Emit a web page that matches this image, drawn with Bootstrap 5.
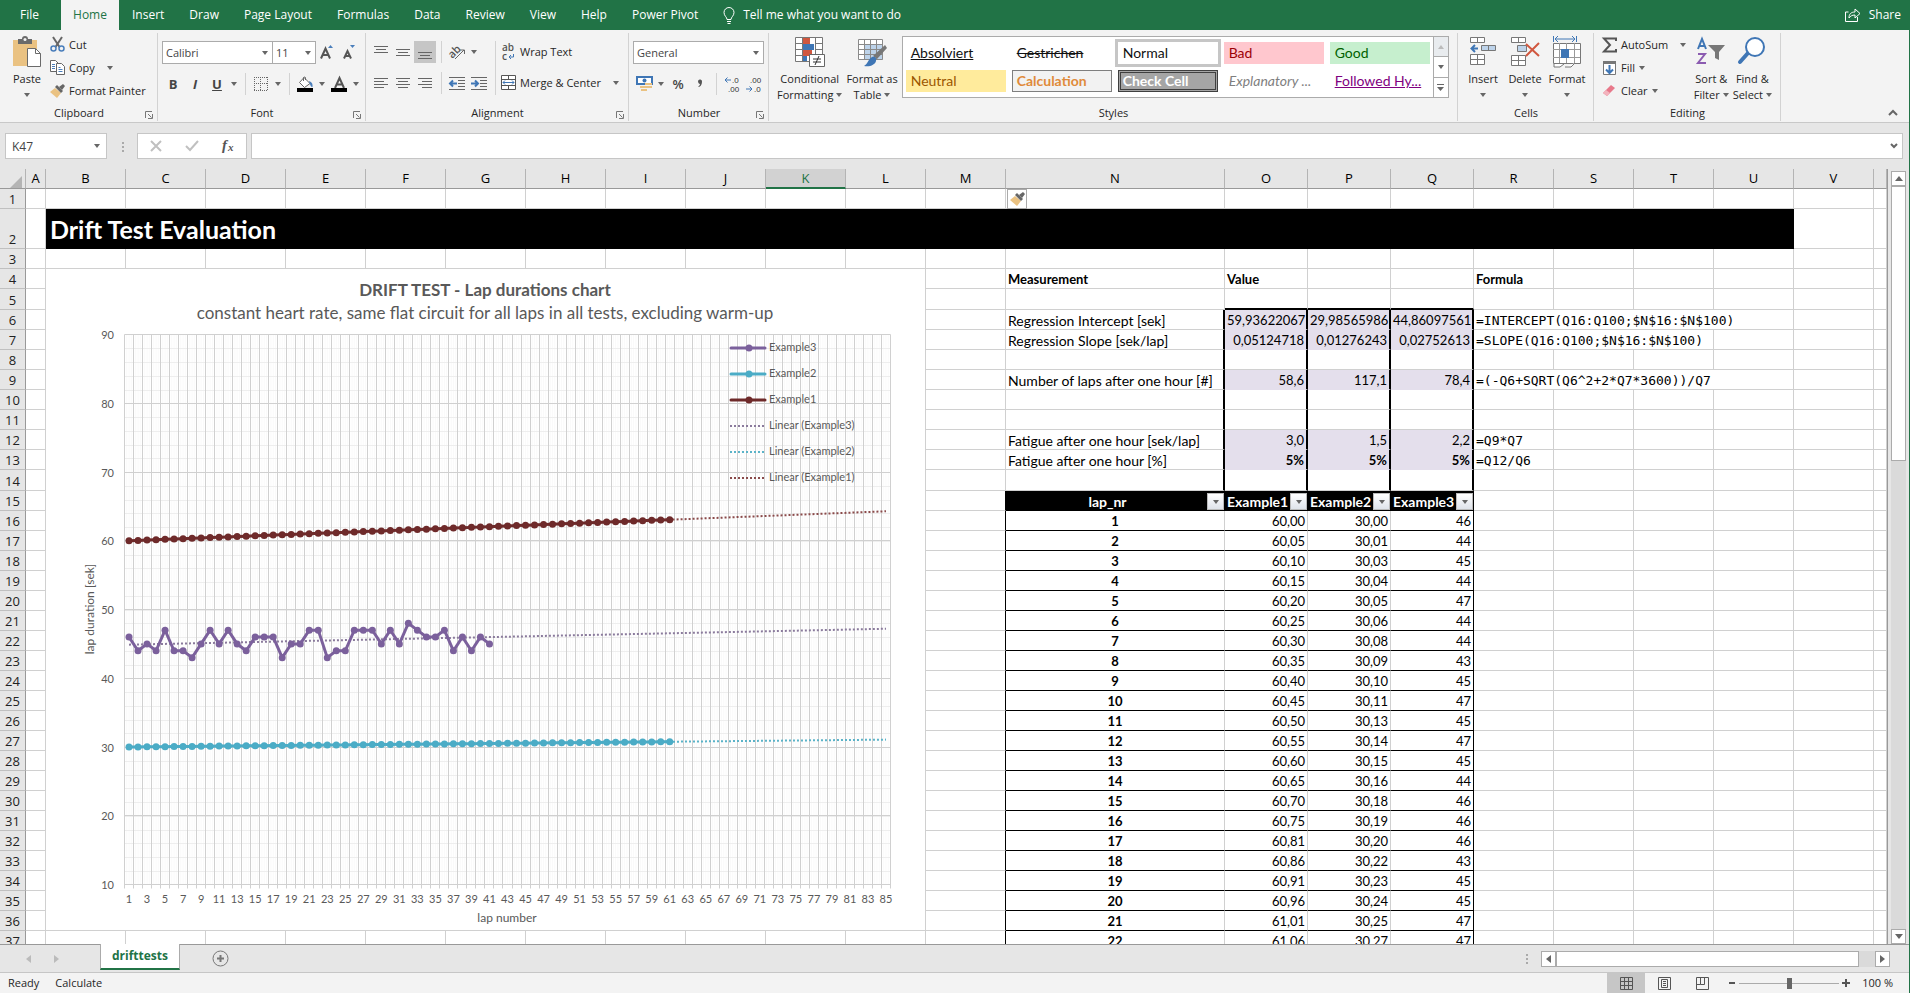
<!DOCTYPE html>
<html lang="en">
<head>
<meta charset="utf-8">
<meta name="viewport" content="width=device-width, initial-scale=1">
<title>Drift Test Evaluation</title>
<link href="https://cdn.jsdelivr.net/npm/bootstrap@5.3.0/dist/css/bootstrap.min.css" rel="stylesheet">
<style>
:root { --xl-green:#217346; --xl-bar:#e6e6e6; --xl-ribbon:#f3f3f3; --xl-line:#d0d0d0; --xl-ink:#262626; }
body { font-family:"Open Sans","Liberation Sans",sans-serif; font-size:11px; line-height:16px; color:var(--xl-ink); background:var(--xl-bar); border-right:1px solid var(--xl-green); }
button { font:inherit; color:inherit; background:none; border:0; padding:0; white-space:nowrap; }
svg { display:block; flex:none; overflow:visible; }

/* menu tabs */
.menu-bar { height:30px; background:var(--xl-green); font-size:12px; }
.menu-bar a, .menu-bar button { display:flex; align-items:center; color:#fff; text-decoration:none; padding:0 12px 0 13px; height:30px; white-space:nowrap; }
.menu-bar .file-tab { width:61px; padding:0 0 0 20px; }
.menu-bar .on { background:var(--xl-ribbon); color:var(--xl-green); width:58px; justify-content:center; padding:0; }

/* ribbon */
.ribbon { background:var(--xl-ribbon); height:93px; border-bottom:1px solid #c8c8c8; }
.rgroup { position:relative; display:flex; flex-direction:column; height:88px; margin-top:3px; padding-left:4px; border-right:1px solid #d2d2d2; }
.rbody { display:flex; height:73px; }
.rname { text-align:center; line-height:16px; margin-left:-3px; }
.launch { position:absolute; right:4px; bottom:2px; }
.tool { width:22px; height:22px; display:flex; align-items:center; justify-content:center; flex:none; }
.tool.pressed { background:#c6c6c6; }
.drop { width:12px; height:22px; display:flex; align-items:center; justify-content:center; flex:none; }
.tri { display:inline-block; border:solid transparent; border-width:4px 3px 0; border-top-color:#666; flex:none; }
.vsep { width:10px; height:22px; flex:none; background:linear-gradient(#d2d2d2,#d2d2d2) center/1px 100% no-repeat; }
.tools-col { padding-top:8px; display:flex; flex-direction:column; gap:9px; }
.line-col { display:flex; flex-direction:column; }
.line-col button { height:23px; display:flex; align-items:center; gap:4px; }
.big { display:flex; flex-direction:column; align-items:center; text-align:center; padding-top:3px; }
.big svg { margin-bottom:3px; }
.big .tri { margin-top:6px; }
.big .cap-tri { margin:0 0 2px 3px; }
.xl-select { appearance:none; height:23px; border:1px solid #ababab; border-radius:0; padding:0 3px; font:inherit; color:#444; line-height:21px; background:#fff url("data:image/svg+xml,%3Csvg xmlns='http://www.w3.org/2000/svg' width='6' height='4'%3E%3Cpath d='M0 0h6L3 4z' fill='%23666'/%3E%3C/svg%3E") right 4px center no-repeat; }
.w-font { width:111px; } .w-size { width:43px; border-left:0; } .w-num { width:131px; }
.g-clip { width:158px; } .g-font { width:208px; } .g-align { width:263px; } .g-num { width:140px; } .g-style { width:689px; } .g-cells { width:136px; } .g-edit { width:187px; }
.bold-glyph { font:bold 13px/22px "Open Sans",sans-serif; color:#444; }
.w-cell { width:42px; }

/* style gallery */
.gallery { display:flex; width:547px; height:62px; margin-top:3px; border:1px solid #ababab; background:#fff; }
.gal-grid { flex:1; display:grid; grid-template-columns:repeat(5,100px); gap:6px; padding:5px 3px; }
.gal-grid button { font-family:Lato,sans-serif; font-size:14px; height:22px; line-height:20px; text-align:left; padding-left:4px; border:1px solid transparent; overflow:hidden; color:#111; }
.gal-grid .st-normal { outline:3px solid #c6c6c6; }
.gal-grid .st-bad { background:#ffc7ce; color:#9c0006; }
.gal-grid .st-good { background:#c6efce; color:#006100; }
.gal-grid .st-neutral { background:#ffeb9c; color:#9c5700; }
.gal-grid .st-calc { background:#f2f2f2; color:#e08a3a; border-color:#7f7f7f; font-weight:bold; }
.gal-grid .st-check { background:#a5a5a5; color:#fff; border:3px double #3f3f3f; font-weight:bold; line-height:16px; padding-left:2px; }
.gal-grid .st-expl { color:#7f7f7f; font-style:italic; }
.gal-grid .st-foll { color:#800080; text-decoration:underline; }
.gal-scroll { width:15px; display:flex; flex-direction:column; border-left:1px solid #ababab; }
.gal-scroll button { flex:1; display:flex; flex-direction:column; gap:2px; align-items:center; justify-content:center; }
.gal-scroll button + button { border-top:1px solid #ababab; }

/* formula bar */
.formula-bar { padding:10px 6px 10px 5px; height:46px; font-size:12px; }
.fx-box { height:26px; background:#fff; border:1px solid #c6c6c6; }
.name-box { width:102px; height:26px; padding:0 6px; color:#444; border-color:#c6c6c6; background-position:right 6px center; }
.fx-tools { width:110px; margin-left:8px; margin-right:4px; }
.fx-tools button { width:36px; height:24px; display:flex; align-items:center; justify-content:center; }
.fx-input { border:0; outline:0; flex:1; min-width:0; }
.dots { width:15px; margin-left:7px; }

/* sheet */
.sheet-view { position:relative; flex:1; overflow:hidden; background:#fff; border-right:1px solid #999; }
.sheet-grid { table-layout:fixed; border-collapse:separate; border-spacing:0; width:100%; min-width:1887px; font-family:Lato,"Liberation Sans",sans-serif; font-size:13px; color:#000; }
.sheet-grid th, .sheet-grid td { height:20px; line-height:17px; padding:2px 2px 0; border-right:1px solid var(--xl-line); border-bottom:1px solid var(--xl-line); white-space:nowrap; vertical-align:bottom; }
.sheet-grid thead th, .sheet-grid .rh { font-family:"Open Sans","Liberation Sans",sans-serif; font-weight:normal; background:var(--xl-bar); text-align:center; padding:0; }
.sheet-grid thead th { border-right-color:#b4b4b4; border-bottom-color:#999; line-height:19px; }
.sheet-grid thead .sel { background:#d2d2d2; color:var(--xl-green); border-bottom:2px solid var(--xl-green); line-height:18px; }
.sheet-grid .rh { border-right-color:#999; border-bottom-color:#c0c0c0; color:#222; line-height:17px; }
.sheet-grid .tall { height:21px; }
.sheet-grid .title-row > * { height:40px; }
.sheet-grid .title-cell { background:#000; color:#fff; font-size:25px; font-weight:bold; line-height:36px; padding:0 4px; border-color:#000; vertical-align:middle; }
.sheet-grid .label-cell { font-size:14px; }
.sheet-grid .num { text-align:right; }
.sheet-grid .tint { background:#e4dfec; border-bottom-color:#e4dfec; }
.sheet-grid .thick-r { border-right:2px solid #000; }
.sheet-grid .thick-b { border-bottom:2px solid #000; }
.sheet-grid .line-r { border-right-color:#000; }
.sheet-grid .line-b { border-bottom-color:#000; }
.sheet-grid .mono { font-family:"DejaVu Sans Mono","Liberation Mono",monospace; }
.sheet-grid .list-head { background:#000; color:#fff; border-color:#000; font-size:14px; padding:0 0 0 2px; }
.filter-btn { width:17px; height:17px; background:linear-gradient(#fff,#dfe3ea); border:1px solid #bbb; display:flex; align-items:center; justify-content:center; flex:none; }
.w-rh { width:26px; } .w-a { width:20px; } .w-std { width:80px; } .w-n { width:219px; } .w-val { width:83px; }
.chart-box { position:absolute; left:46px; top:100px; width:879px; height:661px; background:#fff; }
.chart-box text { font-family:Lato,"Liberation Sans",sans-serif; font-size:11px; fill:#595959; }
.chart-box .chart-title { font-size:17px; font-weight:bold; }
.chart-box .chart-sub { font-size:17px; }
.chart-box .axis-title { font-size:12px; }
.paste-opt { position:absolute; left:1007px; top:20px; width:20px; height:20px; border:1px solid #ababab; background:#fff; display:flex; align-items:center; justify-content:center; }
.corner { margin-left:10px; margin-top:4px; }

/* scroll bars */
.vscroll { width:21px; padding:2px 3px 0; display:flex; flex-direction:column; }
.sb-btn { width:15px; height:15px; background:#fff; border:1px solid #ababab; display:flex; align-items:center; justify-content:center; flex:none; }
.sb-track { flex:1; background:#dadada; display:flex; }
.vscroll .sb-thumb { width:15px; height:37%; background:#fff; border:1px solid #ababab; }
.hscroll { width:349px; height:16px; margin-right:19px; }
.hscroll .sb-btn { height:16px; }
.hscroll .sb-thumb { width:95%; background:#fff; border:1px solid #ababab; }

/* sheet tabs and status bar */
.tab-strip { height:28px; border-top:1px solid #999; }
.tab-nav { width:100px; gap:23px; padding-left:26px; }
.tab-on { align-self:flex-start; height:26px; width:80px; margin-top:-1px; background:#fff; color:var(--xl-green); font-weight:bold; font-size:12px; border:1px solid #ababab; border-width:0 1px; border-bottom:2px solid var(--xl-green); }
.status-bar { height:21px; background:var(--xl-ribbon); border-top:1px solid #c6c6c6; }
.view-btn { width:38px; height:20px; display:flex; align-items:center; justify-content:center; }
.view-btn.pressed { background:#c6c6c6; }
.zoom-range { appearance:none; width:100px; height:20px; background:linear-gradient(#ababab,#ababab) center/100% 1px no-repeat; margin:0 3px; }
.zoom-range::-webkit-slider-thumb { appearance:none; width:5px; height:11px; background:#666; }
</style>
</head>
<body class="vh-100 d-flex flex-column overflow-hidden">

<nav class="menu-bar d-flex flex-shrink-0" aria-label="Ribbon tabs">
  <a href="#" class="file-tab">File</a><a href="#" class="on">Home</a><a href="#">Insert</a><a href="#">Draw</a><a href="#">Page Layout</a><a href="#">Formulas</a><a href="#">Data</a><a href="#">Review</a><a href="#">View</a><a href="#">Help</a><a href="#">Power Pivot</a>
  <button type="button" class="gap-2"><svg width="12" height="17" viewBox="0 0 12 17" fill="none" stroke="#fff"><path d="M4 12.500c0-2.500-3-3.500-3-7a5 5 0 0 1 10 0c0 3.500-3 4.500-3 7zM4 14.500h4M4.500 16.500h3"/></svg>Tell me what you want to do</button>
  <button type="button" class="ms-auto gap-2 px-2"><svg width="16" height="14" viewBox="0 0 16 14" fill="none" stroke="#fff"><path d="M3.500 4H.5v9.500h12V9M4 10c0-4 2-6 6-6V1l5 4.500L10 10V7C7 7 5.500 8 4 10z"/></svg>Share</button>
</nav>

<div class="ribbon d-flex flex-shrink-0">
  <section class="rgroup g-clip">
    <div class="rbody">
      <button type="button" class="big ps-2">
        <svg width="30" height="32" viewBox="0 0 30 32"><path d="M1 4h24v26H1z" fill="#eac282"/><path d="M6 3h4a3 3 0 0 1 6 0h4v5H6z" fill="#6a6a6a"/><circle cx="13" cy="3.500" r="1.500" fill="#f3f3f3"/><path d="M15.500 12.500h8l5 5v13h-13z" fill="#fff" stroke="#6a6a6a"/><path d="M23.500 12.500v5h5" fill="none" stroke="#6a6a6a"/></svg>
        <span>Paste</span><i class="tri"></i></button>
      <div class="line-col ms-2">
        <button type="button"><svg width="15" height="15" viewBox="0 0 15 15" fill="none"><path d="M3 0l6.500 10M12 0L5.500 10" stroke="#666" stroke-width="2"/><circle cx="3.500" cy="11.500" r="2.500" stroke="#4a7ebb" stroke-width="1.500"/><circle cx="11.500" cy="11.500" r="2.500" stroke="#4a7ebb" stroke-width="1.500"/></svg>Cut</button>
        <button type="button"><svg width="15" height="15" viewBox="0 0 15 15" fill="#fff" stroke="#666"><path d="M.5.5h5l3 3v8h-8z"/><path d="M2 4.500h3M2 6.500h3M2 8.500h3" stroke="#4a7ebb"/><path d="M6.500 3.500h5l3 3v8h-8z"/><path d="M8.500 7.500h2M8.500 9.500h4M8.500 11.500h4" stroke="#4a7ebb"/></svg>Copy <i class="tri ms-2"></i></button>
        <button type="button"><svg width="15" height="14" viewBox="0 0 15 14"><path d="M0 8l5-4 6 5-4 5z" fill="#eac282"/><path d="M5 3l2-2 6 6-2 2z" fill="#666"/><path d="M9 3l4-3 2 2-3 4z" fill="#666"/></svg>Format Painter</button>
      </div>
    </div>
    <div class="rname">Clipboard</div>
    <button type="button" class="launch" aria-label="Clipboard options"><svg width="8" height="8" viewBox="0 0 8 8" fill="none" stroke="#777"><path d="M.5 7V.5H7M3 3l3.500 3.500M7.500 3v4.500H3"/></svg></button>
  </section>

  <section class="rgroup g-font">
    <div class="rbody tools-col">
      <div class="d-flex">
        <select class="xl-select w-font" aria-label="Font"><option>Calibri</option></select><select class="xl-select w-size" aria-label="Font size"><option>11</option></select>
        <button type="button" class="tool" aria-label="Grow font"><svg width="14" height="16" viewBox="0 0 14 16"><path d="M1 14.500L5.500 4.500 10 14.500M2.500 11h6" fill="none" stroke="#555" stroke-width="2"/><path d="M8 4h5L10.500 1z" fill="#4a7ebb"/></svg></button>
        <button type="button" class="tool" aria-label="Shrink font"><svg width="14" height="16" viewBox="0 0 14 16"><path d="M2 14.500L5.500 7l3.500 7.500M3 12h5" fill="none" stroke="#555" stroke-width="2"/><path d="M8 1h5l-2.500 3z" fill="#4a7ebb"/></svg></button>
      </div>
      <div class="d-flex">
        <button type="button" class="tool bold-glyph">B</button><button type="button" class="tool bold-glyph fst-italic">I</button><button type="button" class="tool bold-glyph text-decoration-underline">U</button><button type="button" class="drop" aria-label="Underline options"><i class="tri"></i></button><span class="vsep"></span>
        <button type="button" class="tool" aria-label="Borders"><svg width="14" height="14" viewBox="0 0 14 14" fill="none" stroke="#666" stroke-dasharray="1 1"><path d="M0 .5h14M0 13.500h14M0 6.500h14M.5 0v14M6.500 0v14M13.500 0v14"/></svg></button><button type="button" class="drop" aria-label="Border options"><i class="tri"></i></button><span class="vsep"></span>
        <button type="button" class="tool" aria-label="Fill colour"><svg width="16" height="16" viewBox="0 0 16 16"><path d="M7 1.500l6 6-5.500 4-5-5zM6.500 5V1.500a1.500 1.500 0 0 1 2 0V4" fill="#fff" stroke="#666"/><path d="M12 5c3 1 4 3 3.500 6-2 0-2-2-3-4z" fill="#4a7ebb"/><path d="M0 12h16v4H0z"/></svg></button><button type="button" class="drop" aria-label="Fill options"><i class="tri"></i></button>
        <button type="button" class="tool" aria-label="Font colour"><svg width="16" height="16" viewBox="0 0 16 16"><path d="M4 12L8.500 2 13 12M5.500 8.500h6" fill="none" stroke="#555" stroke-width="2"/><path d="M0 12h16v4H0z"/></svg></button><button type="button" class="drop" aria-label="Font colour options"><i class="tri"></i></button>
      </div>
    </div>
    <div class="rname">Font</div>
    <button type="button" class="launch" aria-label="Font options"><svg width="8" height="8" viewBox="0 0 8 8" fill="none" stroke="#777"><path d="M.5 7V.5H7M3 3l3.500 3.500M7.500 3v4.500H3"/></svg></button>
  </section>

  <section class="rgroup g-align">
    <div class="rbody">
      <div class="tools-col">
        <div class="d-flex">
          <button type="button" class="tool" aria-label="Top align"><svg width="14" height="14" stroke="#666"><path d="M0 1.500h14M2 4.500h10M0 7.500h14"/></svg></button>
          <button type="button" class="tool" aria-label="Middle align"><svg width="14" height="14" stroke="#666"><path d="M0 4.500h14M2 7.500h10M0 10.500h14"/></svg></button>
          <button type="button" class="tool pressed" aria-label="Bottom align"><svg width="14" height="14" stroke="#666"><path d="M0 7.500h14M2 10.500h10M0 13.500h14"/></svg></button>
          <span class="vsep"></span>
          <button type="button" class="tool" aria-label="Orientation"><svg width="17" height="16" viewBox="0 0 17 16"><text x="-1" y="11" transform="rotate(-45 6 8)" font-size="11" font-family="Open Sans" font-weight="600" fill="#555">ab</text><path d="M6 15l9-9M11 6h4.500v4" fill="none" stroke="#666"/></svg></button><button type="button" class="drop" aria-label="Orientation options"><i class="tri"></i></button>
        </div>
        <div class="d-flex">
          <button type="button" class="tool" aria-label="Align left"><svg width="14" height="11" stroke="#666"><path d="M0 .5h14M0 3.500h10M0 6.500h14M0 9.500h10"/></svg></button>
          <button type="button" class="tool" aria-label="Centre"><svg width="14" height="11" stroke="#666"><path d="M0 .5h14M2 3.500h10M0 6.500h14M2 9.500h10"/></svg></button>
          <button type="button" class="tool" aria-label="Align right"><svg width="14" height="11" stroke="#666"><path d="M0 .5h14M4 3.500h10M0 6.500h14M4 9.500h10"/></svg></button>
          <span class="vsep"></span>
          <button type="button" class="tool" aria-label="Decrease indent"><svg width="16" height="13" fill="none" stroke="#666"><path d="M0 .5h16M9 3.500h7M9 6.500h7M9 9.500h7M0 12.500h16"/><path d="M8 6.500H1.500M4 3.500l-3 3 3 3" stroke="#3f76b5" stroke-width="2"/></svg></button>
          <button type="button" class="tool" aria-label="Increase indent"><svg width="16" height="13" fill="none" stroke="#666"><path d="M0 .5h16M9 3.500h7M9 6.500h7M9 9.500h7M0 12.500h16"/><path d="M0 6.500h6.500M4 3.500l3 3-3 3" stroke="#3f76b5" stroke-width="2"/></svg></button>
        </div>
      </div>
      <span class="vsep h-75 mt-2"></span>
      <div class="tools-col">
        <button type="button" class="d-flex align-items-center gap-1"><svg width="16" height="22" viewBox="0 0 16 22"><text x="2" y="10" font-size="10" font-family="Open Sans" font-weight="600" fill="#555">ab</text><text x="2" y="19" font-size="10" font-family="Open Sans" font-weight="600" fill="#555">c</text><path d="M13.500 13v3H9M11 14l-2 2 2 2" fill="none" stroke="#3f76b5"/></svg>Wrap Text</button>
        <button type="button" class="d-flex align-items-center gap-1"><svg width="16" height="22" viewBox="0 0 16 22" fill="#fff" stroke="#555"><path d="M1.500 3.500h14v14h-14zM1.500 7.500h14M1.500 13.500h14M8.500 3.500v4M8.500 13.500v4"/><path d="M3 10.500h11M5 8.500l-2 2 2 2M12 8.500l2 2-2 2" fill="none" stroke="#3f76b5"/></svg>Merge &amp; Center<i class="tri ms-2"></i></button>
      </div>
    </div>
    <div class="rname">Alignment</div>
    <button type="button" class="launch" aria-label="Alignment options"><svg width="8" height="8" viewBox="0 0 8 8" fill="none" stroke="#777"><path d="M.5 7V.5H7M3 3l3.500 3.500M7.500 3v4.500H3"/></svg></button>
  </section>

  <section class="rgroup g-num">
    <div class="rbody tools-col">
      <select class="xl-select w-num" aria-label="Number format"><option>General</option></select>
      <div class="d-flex">
        <button type="button" class="tool" aria-label="Accounting format"><svg width="17" height="16" viewBox="0 0 17 16"><path d="M1 1h15v7H1z" fill="#fff" stroke="#3f76b5" stroke-width="2"/><circle cx="8.500" cy="4.500" r="2" fill="#3f76b5"/><path d="M9 7h7v2H9zM9 10h7v2H9zM4 10h5v2H4zM5 13h6v2H5z" fill="#eac282"/></svg></button><button type="button" class="drop" aria-label="Accounting options"><i class="tri"></i></button>
        <button type="button" class="tool bold-glyph fw-semibold">%</button>
        <button type="button" class="tool" aria-label="Comma style"><svg width="6" height="8" viewBox="0 0 6 8"><path d="M1 1a2 2 0 1 1 4 1C5 5 3 7 1 7c1-1 2-2 2-3C2 4 1 3 1 1z" fill="#555"/></svg></button>
        <span class="vsep"></span>
        <button type="button" class="tool" aria-label="Increase decimal"><svg width="16" height="18" viewBox="0 0 16 18" font-family="Liberation Sans"><text x="8" y="8" font-size="8" fill="#333">.0</text><text x="4" y="17" font-size="8" fill="#333">.00</text><path d="M7 5H1M3.500 2.500L1 5l2.500 2.500" fill="none" stroke="#3f76b5"/></svg></button>
        <button type="button" class="tool" aria-label="Decrease decimal"><svg width="16" height="18" viewBox="0 0 16 18" font-family="Liberation Sans"><text x="4" y="8" font-size="8" fill="#333">.00</text><text x="8" y="17" font-size="8" fill="#333">.0</text><path d="M0 14h6M3.500 11.500L6 14l-2.500 2.500" fill="none" stroke="#3f76b5"/></svg></button>
      </div>
    </div>
    <div class="rname">Number</div>
    <button type="button" class="launch" aria-label="Number options"><svg width="8" height="8" viewBox="0 0 8 8" fill="none" stroke="#777"><path d="M.5 7V.5H7M3 3l3.500 3.500M7.500 3v4.500H3"/></svg></button>
  </section>

  <section class="rgroup g-style">
    <div class="rbody">
      <button type="button" class="big px-1"><svg width="30" height="32" viewBox="0 0 30 32"><path d="M.5 1.500h27v24H.5z" fill="#fff"/><path d="M7 1h8v7H7zM7 14h10v6H7z" fill="#d0573f"/><path d="M7 8h12v6H7zM7 20h5v6H7z" fill="#3f76b5"/><path d="M.5 1.500h27v24H.5zM7.500 1v25M20.500 1v25M0 7.500h7M0 13.500h7M0 19.500h7M20 7.500h7M20 13.500h7" fill="none" stroke="#777"/><path d="M14.500 18.500h15v12h-15z" fill="#fff" stroke="#666"/><path d="M18 23h8M18 26h8M24 20l-4 9" stroke="#333"/></svg><span>Conditional<br>Formatting<i class="tri cap-tri"></i></span></button>
      <button type="button" class="big"><svg width="30" height="32" viewBox="0 0 30 32"><path d="M1.500 3.500h24v20h-24z" fill="#fff"/><path d="M7 9h19v15H7z" fill="#bdd3ea"/><path d="M1.500 3.500h24v20h-24zM1 8.500h24M1 13.500h24M1 18.500h24M7.500 3v20M13.500 3v20M19.500 3v20" fill="none" stroke="#8a8a8a"/><path d="M28 9l2 3-10 11-4-3z" fill="#777"/><path d="M15 21c3-1 5 1 4 4-1 4-6 6-12 5 4-2 4-7 8-9z" fill="#3f76b5"/></svg><span>Format as<br>Table<i class="tri cap-tri"></i></span></button>
      <div class="gallery ms-1">
        <div class="gal-grid">
          <button type="button" class="text-decoration-underline">Absolviert</button><button type="button" class="text-decoration-line-through">Gestrichen</button><button type="button" class="st-normal">Normal</button><button type="button" class="st-bad">Bad</button><button type="button" class="st-good">Good</button>
          <button type="button" class="st-neutral">Neutral</button><button type="button" class="st-calc">Calculation</button><button type="button" class="st-check">Check Cell</button><button type="button" class="st-expl">Explanatory ...</button><button type="button" class="st-foll">Followed Hy...</button>
        </div>
        <div class="gal-scroll">
          <button type="button" class="bg-body-secondary" aria-label="Previous styles"><svg width="6" height="4"><path d="M0 4h6L3 0z" fill="#bbb"/></svg></button>
          <button type="button" aria-label="Next styles"><i class="tri"></i></button>
          <button type="button" aria-label="All styles"><svg width="7" height="7"><path d="M0 0h7v1H0zM0 3h7L3.500 7z" fill="#666"/></svg></button>
        </div>
      </div>
    </div>
    <div class="rname">Styles</div>
  </section>

  <section class="rgroup g-cells">
    <div class="rbody">
      <button type="button" class="big w-cell"><svg width="28" height="32" viewBox="0 0 28 32" fill="#fff" stroke="#777"><path d="M1.500 1.500h14v5h-14zM8.500 1v5M1.500 18.500h14v10h-14zM8.500 18v10M1 23.500h14"/><path d="M12.500 9.500h14v5h-14zM19.500 9v5" fill="#bdd3ea"/><path d="M9 12.500H3M6 9l-3.500 3.500L6 16" fill="none" stroke="#3f76b5" stroke-width="2"/></svg><span>Insert</span><i class="tri"></i></button>
      <button type="button" class="big w-cell"><svg width="30" height="32" viewBox="0 0 30 32" fill="#fff" stroke="#777"><path d="M1.500 1.500h14v5h-14zM8.500 1v5M1.500 19.500h14v10h-14zM8.500 19v10M1 24.500h14"/><path d="M7.500 9.500h9v6h-9z" fill="#bdd3ea"/><path d="M16 8l13 12M29 7L16 20" stroke="#d0573f" stroke-width="2"/></svg><span>Delete</span><i class="tri"></i></button>
      <button type="button" class="big w-cell"><svg width="30" height="32" viewBox="0 0 30 32" fill="#fff" stroke="#777"><path d="M1.500 7.500h27v20h-27z"/><path d="M7.500 7v20M14.500 7v20M22.500 7v20M1 13.500h27M1 21.500h27" fill="none" stroke="#999"/><path d="M9 13h8v9H9z" fill="#3f76b5" stroke="none"/><path d="M2 28l0 3h6l4-3M13 31h6l4-4"/><path d="M1.500 0v6M24.500 0v6M3 3h20M6 0L3 3l3 3M20 0l3 3-3 3" fill="none" stroke="#3f76b5"/></svg><span>Format</span><i class="tri"></i></button>
    </div>
    <div class="rname">Cells</div>
  </section>

  <section class="rgroup g-edit">
    <div class="rbody">
      <div class="line-col ms-1">
        <button type="button"><svg width="15" height="16" viewBox="0 0 15 16"><path d="M14 4V1.500H2l6 6.500-6 6.500h12V12" fill="none" stroke="#555" stroke-width="2"/></svg>AutoSum<i class="tri ms-2"></i></button>
        <button type="button"><svg width="15" height="16" viewBox="0 0 15 16"><path d="M1.500 1.500h12v13h-12z" fill="#fff" stroke="#777"/><path d="M1 1h13v3H1z" fill="#777"/><path d="M7.500 5v8M4 9.500L7.500 13 11 9.500" fill="none" stroke="#3f76b5" stroke-width="2"/></svg>Fill<i class="tri"></i></button>
        <button type="button"><svg width="15" height="14" viewBox="0 0 15 14"><path d="M1 9l8-8 4 3-8 8z" fill="#e8788a"/><path d="M1 9l3-3 4 3-3 3z" fill="#f3b3bd"/></svg>Clear<i class="tri"></i></button>
      </div>
      <button type="button" class="big ms-auto"><svg width="30" height="32" viewBox="0 0 30 32" fill="none"><path d="M2 13L6 3l4 10M3 10h6" stroke="#3f76b5" stroke-width="2"/><path d="M2 18h7l-7 9h8" stroke="#8b5bb0" stroke-width="2"/><path d="M12 9h17l-6 7v8l-4-2v-6z" fill="#777"/></svg><span>Sort &amp;<br>Filter<i class="tri cap-tri"></i></span></button>
      <button type="button" class="big ms-1 me-1 pe-1"><svg width="30" height="32" viewBox="0 0 30 32" fill="none" stroke="#3f76b5"><path d="M11 17L3 26" stroke-width="4" stroke-linecap="round"/><circle cx="18" cy="11" r="9" fill="#fff" stroke-width="2"/></svg><span>Find &amp;<br>Select<i class="tri cap-tri"></i></span></button>
    </div>
    <div class="rname">Editing</div>
  </section>
  <button type="button" class="ms-auto align-self-end p-2 pb-1" aria-label="Collapse ribbon"><svg width="16" height="10" viewBox="0 0 16 10"><path d="M4 7l4-4 4 4" fill="none" stroke="#666" stroke-width="2"/></svg></button>
</div>

<div class="formula-bar d-flex flex-shrink-0">
  <select class="xl-select name-box" aria-label="Name box"><option>K47</option></select>
  <svg class="dots mt-2" height="12"><path d="M8 1h2v2H8zM8 5h2v2H8zM8 9h2v2H8z" fill="#aaa"/></svg>
  <div class="fx-box fx-tools d-flex">
    <button type="button" aria-label="Cancel"><svg width="12" height="12"><path d="M1 1l10 10M11 1L1 11" stroke="#c0c0c0" stroke-width="2"/></svg></button>
    <button type="button" aria-label="Enter"><svg width="14" height="12"><path d="M1 6l4 4 8-9" fill="none" stroke="#c0c0c0" stroke-width="2"/></svg></button>
    <button type="button" class="fst-italic" aria-label="Insert function"><svg width="14" height="16" viewBox="0 0 14 16"><text x="1" y="12" font-family="Liberation Serif" font-size="15" font-weight="bold" fill="#555">f</text><text x="7" y="13" font-family="Liberation Serif" font-size="11" font-weight="bold" fill="#555">x</text></svg></button>
  </div>
  <div class="fx-box d-flex flex-fill align-items-center">
    <input class="fx-input" type="text" aria-label="Formula bar">
    <button type="button" class="px-1" aria-label="Expand formula bar"><svg width="8" height="6"><path d="M1 1l3 3 3-3" fill="none" stroke="#666" stroke-width="2"/></svg></button>
  </div>
</div>

<main class="d-flex flex-fill overflow-hidden">
  <div class="sheet-view">
    <table class="sheet-grid">
      <colgroup id="cols"></colgroup>
      <thead><tr id="letters"></tr></thead>
      <tbody id="rows"></tbody>
    </table>
    <svg class="chart-box" id="chart" viewBox="46 269 879 661" role="img" aria-label="Lap durations chart"></svg>
    <button type="button" class="paste-opt" aria-label="Paste options"><svg width="15" height="14" viewBox="0 0 15 14"><path d="M0 8l5-4 6 5-4 5z" fill="#eac282"/><path d="M5 3l2-2 6 6-2 2z" fill="#666"/><path d="M9 3l4-3 2 2-3 4z" fill="#666"/></svg></button>
  </div>
  <div class="vscroll">
    <button type="button" class="sb-btn" aria-label="Scroll up"><svg width="8" height="5"><path d="M0 5h8L4 0z" fill="#666"/></svg></button>
    <div class="sb-track"><div class="sb-thumb"></div></div>
    <button type="button" class="sb-btn" aria-label="Scroll down"><svg width="8" height="5"><path d="M0 0h8L4 5z" fill="#666"/></svg></button>
  </div>
</main>

<div class="tab-strip d-flex align-items-center flex-shrink-0">
  <div class="tab-nav d-flex">
    <button type="button" aria-label="Previous sheet"><svg width="5" height="8"><path d="M5 0v8L0 4z" fill="#bbb"/></svg></button>
    <button type="button" aria-label="Next sheet"><svg width="5" height="8"><path d="M0 0v8l5-4z" fill="#bbb"/></svg></button>
  </div>
  <button type="button" class="tab-on">drifttests</button>
  <button type="button" class="ms-4 ps-2" aria-label="New sheet"><svg width="17" height="17" viewBox="0 0 17 17" fill="none" stroke="#777"><circle cx="8.500" cy="8.500" r="7.500"/><path d="M8.500 5v7M5 8.500h7" stroke-width="2"/></svg></button>
  <svg class="ms-auto dots" height="12"><path d="M0 1h2v2H0zM0 5h2v2H0zM0 9h2v2H0z" fill="#aaa"/></svg>
  <div class="hscroll d-flex">
    <button type="button" class="sb-btn" aria-label="Scroll left"><svg width="5" height="8"><path d="M5 0v8L0 4z" fill="#666"/></svg></button>
    <div class="sb-track"><div class="sb-thumb"></div></div>
    <button type="button" class="sb-btn" aria-label="Scroll right"><svg width="5" height="8"><path d="M0 0v8l5-4z" fill="#666"/></svg></button>
  </div>
</div>

<footer class="status-bar d-flex align-items-center flex-shrink-0 ps-2">
  <span>Ready</span><span class="ms-3">Calculate</span>
  <button type="button" class="view-btn pressed ms-auto" aria-label="Normal view"><svg width="13" height="13" fill="none" stroke="#555"><path d="M.5.5h12v12H.5zM4.500 0v13M8.500 0v13M0 4.500h13M0 8.500h13"/></svg></button>
  <button type="button" class="view-btn" aria-label="Page layout view"><svg width="13" height="13" fill="none" stroke="#555"><path d="M.5.5h12v12H.5zM3.500 2.500h6v8h-6zM5 4.500h3M5 6.500h3M5 8.500h3"/></svg></button>
  <button type="button" class="view-btn" aria-label="Page break view"><svg width="13" height="13" fill="none" stroke="#555"><path d="M.5.5h12v12H.5zM4.500 0v7.500H0M8.500 0v7.500M4.500 7.500h4"/></svg></button>
  <button type="button" class="ps-2" aria-label="Zoom out"><svg width="7" height="8"><path d="M0 3h6v2H0z" fill="#555"/></svg></button>
  <input class="zoom-range" type="range" min="0" max="100" value="50" aria-label="Zoom">
  <button type="button" class="me-2" aria-label="Zoom in"><svg width="8" height="8"><path d="M0 3h3V0h2v3h3v2H5v3H3V5H0z" fill="#555"/></svg></button>
  <button type="button" class="me-3 ps-1">100 %</button>
</footer>

<script src="https://cdn.jsdelivr.net/npm/bootstrap@5.3.0/dist/js/bootstrap.bundle.min.js"></script>
<script>
const letters = 'ABCDEFGHIJKLMNOPQRSTUV'.split('');
const widthOf = c => c === 'A' ? 'w-a' : c === 'N' ? 'w-n' : 'OPQ'.includes(c) ? 'w-val' : 'w-std';
document.getElementById('cols').innerHTML = '<col class="w-rh">' + letters.map(c => `<col class="${widthOf(c)}">`).join('') + '<col>';
document.getElementById('letters').innerHTML =
  '<th aria-label="Select all"><svg class="corner" width="12" height="12"><path d="M12 0v12H0z" fill="#b4b4b4"/></svg></th>' +
  letters.map(c => `<th${c === 'K' ? ' class="sel"' : ''}>${c}</th>`).join('') + '<th></th>';

const ex1 = ['60,00','60,05','60,10','60,15','60,20','60,25','60,30','60,35','60,40','60,45','60,50','60,55','60,60','60,65','60,70','60,75','60,81','60,86','60,91','60,96','61,01','61,06'];
const ex2 = ['30,00','30,01','30,03','30,04','30,05','30,06','30,08','30,09','30,10','30,11','30,13','30,14','30,15','30,16','30,18','30,19','30,20','30,22','30,23','30,24','30,25','30,27'];
const ex3 = [46,44,45,44,47,44,44,43,45,47,45,47,45,44,46,46,46,43,45,45,47,47,43,44,44,47,47,47,45,47,45,48,47,46,46,47,44,46,44,46,45];

const measures = {
  6: ['Regression Intercept [sek]', '59,93622067', '29,98565986', '44,86097561', '=INTERCEPT(Q16:Q100;$N$16:$N$100)', 4],
  7: ['Regression Slope [sek/lap]', '0,05124718', '0,01276243', '0,02752613', '=SLOPE(Q16:Q100;$N$16:$N$100)', 3],
  9: ['Number of laps after one hour [#]', '58,6', '117,1', '78,4', '=(-Q6+SQRT(Q6^2+2*Q7*3600))/Q7', 4],
  12: ['Fatigue after one hour [sek/lap]', '3,0', '1,5', '2,2', '=Q9*Q7', 1],
  13: ['Fatigue after one hour [%]', '5%', '5%', '5%', '=Q12/Q6', 1]
};
const empty = n => '<td></td>'.repeat(n);

function rowCells(r) {
  if (r === 2) return '<td></td><td colspan="20" class="title-cell">Drift Test Evaluation</td>' + empty(2);
  if (r === 4) return empty(13) + '<td><b>Measurement</b></td><td><b>Value</b></td>' + empty(2) + '<td><b>Formula</b></td>' + empty(5);
  if (r === 5) return empty(14) + '<td class="thick-b"></td>'.repeat(3) + empty(6);
  if (r >= 6 && r <= 14) {
    const m = measures[r], bold = r === 13 ? ' fw-bold' : '';
    let h = empty(13) + `<td class="label-cell thick-r">${m ? m[0] : ''}</td>`;
    for (let i = 1; i < 4; i++) h += `<td class="num thick-r${m ? ' tint' + bold : ''}">${m ? m[i] : ''}</td>`;
    return m ? h + `<td class="mono" colspan="${m[5]}">${m[4]}</td>` + empty(6 - m[5]) : h + empty(6);
  }
  if (r === 15) {
    const head = t => `<td class="list-head"><div class="d-flex align-items-center"><b class="flex-fill${t === 'lap_nr' ? ' text-center' : ''}">${t}</b><button type="button" class="filter-btn" aria-label="Filter ${t}"><i class="tri"></i></button></div></td>`;
    return empty(12) + '<td class="line-r"></td>' + ['lap_nr', 'Example1', 'Example2', 'Example3'].map(head).join('') + empty(6);
  }
  if (r > 15) {
    const i = r - 16;
    return empty(12) + `<td class="line-r"></td><td class="line-b text-center fw-bold">${i + 1}</td><td class="line-b num">${ex1[i]}</td><td class="line-b num">${ex2[i]}</td><td class="line-b line-r num">${ex3[i]}</td>` + empty(6);
  }
  return empty(23);
}
let html = '';
for (let r = 1; r <= 37; r++) {
  const tall = r === 5 || r === 14 ? ' tall' : '';
  html += `<tr${r === 2 ? ' class="title-row"' : ''}><th class="rh${tall}">${r}</th>${rowCells(r)}</tr>`;
}
document.getElementById('rows').innerHTML = html;

/* chart: 85 categories across, 10..90 seconds up */
const L = 124.5, R = 890.5, T = 334.5, B = 884.5, step = (R - L) / 85;
const X = n => L + (n - 0.5) * step, Y = v => B - (v - 10) * (B - T) / 80;
let s = '';
const line = (x1, y1, x2, y2, c) => `<line x1="${x1}" y1="${y1}" x2="${x2}" y2="${y2}" stroke="${c}"/>`;
for (let i = 0; i < 85 * 4; i++) if (i % 4) s += line(L + i * step / 4, T, L + i * step / 4, B, '#fafafa');
for (let v = 12; v < 90; v += 2) { const y = Math.round(Y(v)) + .5; s += line(L, y, R, y, '#eeeeee'); }
for (let i = 0; i <= 85; i++) { const x = Math.floor(L + i * step) + .5; s += line(x, T, x, B + 4, '#d0d0d0'); }
for (let v = 10; v <= 90; v += 10) {
  const y = Math.floor(Y(v)) + .5;
  s += line(L, y, R, y, '#d0d0d0') + `<text x="114" y="${y + 4}" text-anchor="end">${v}</text>`;
}
for (let n = 1; n <= 85; n += 2) s += `<text x="${X(n)}" y="903" text-anchor="middle">${n}</text>`;
const trend = (a, b, c) => `<line x1="${X(1)}" y1="${Y(a + b)}" x2="${X(85)}" y2="${Y(a + 85 * b)}" stroke="${c}" stroke-width="2" stroke-dasharray="2 2"/>`;
s += trend(44.861, 0.0275, '#8a7a9c') + trend(29.986, 0.0128, '#5bb3c8') + trend(59.936, 0.0512, '#8a4a4a');
function series(vals, c) {
  s += `<polyline fill="none" stroke="${c}" stroke-width="3" points="${vals.map((v, i) => X(i + 1) + ',' + Y(v)).join(' ')}"/>`;
  vals.forEach((v, i) => { s += `<circle cx="${X(i + 1)}" cy="${Y(v)}" r="3.500" fill="${c}"/>`; });
}
const ramp = (a, b) => Array.from({ length: 61 }, (_, i) => a + b * i);
series(ex3, '#7b609c'); series(ramp(30, 0.0128), '#4bacc6'); series(ramp(60, 0.0512), '#6e2a2a');
[['Example3', '#7b609c'], ['Example2', '#4bacc6'], ['Example1', '#6e2a2a'], ['Linear (Example3)', '#8a7a9c'], ['Linear (Example2)', '#5bb3c8'], ['Linear (Example1)', '#8a4a4a']].forEach(([t, c], i) => {
  const y = 348 + i * 26;
  s += i < 3 ? `<path d="M731 ${y}h34" stroke="${c}" stroke-width="3" stroke-linecap="round"/><circle cx="749" cy="${y}" r="3.500" fill="${c}"/>`
             : `<path d="M730 ${y}h35" stroke="${c}" stroke-width="2" stroke-dasharray="2 2"/>`;
  s += `<text x="769" y="${y + 3}">${t}</text>`;
});
s += '<text class="chart-title" x="485" y="296" text-anchor="middle">DRIFT TEST - Lap durations chart</text>' +
     '<text class="chart-sub" x="485" y="319" text-anchor="middle">constant heart rate, same flat circuit for all laps in all tests, excluding warm-up</text>' +
     '<text class="axis-title" x="507" y="922" text-anchor="middle">lap number</text>' +
     '<text class="axis-title" transform="translate(94 609) rotate(-90)" text-anchor="middle">lap duration [sek]</text>';
document.getElementById('chart').innerHTML = s;
</script>
</body>
</html>
